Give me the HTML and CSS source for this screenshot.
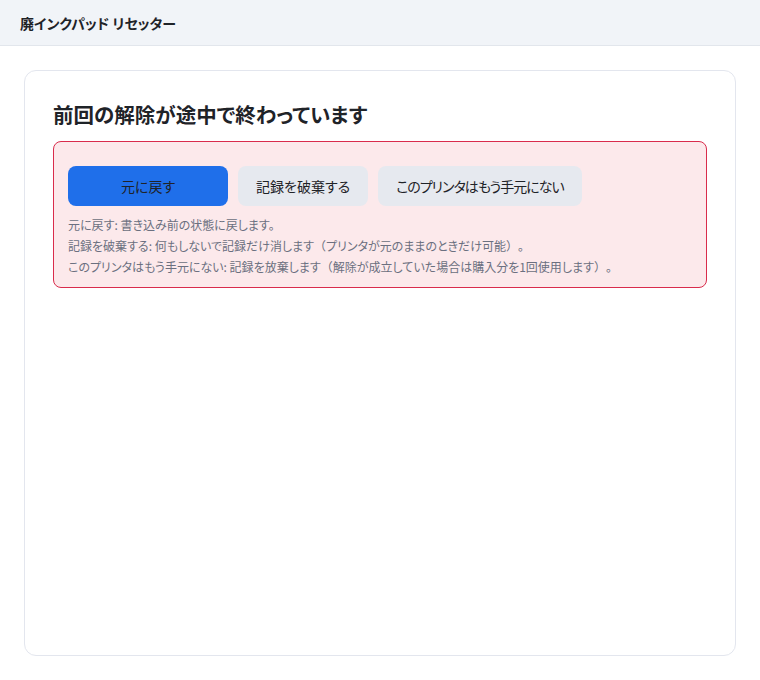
FILE: index.html
```html
<!DOCTYPE html>
<html lang="ja">
<head>
<meta charset="utf-8">
<title>廃インクパッド リセッター</title>
<link rel="stylesheet" href="styles.css">
</head>
<body>
<header class="topbar">
  <span class="app-title">廃インクパッド リセッター</span>
</header>
<main class="content">
  <section class="card">
    <h1 class="card-title">前回の解除が途中で終わっています</h1>
    <div class="alert">
      <div class="actions">
        <button class="btn btn-primary">元に戻す</button>
        <button class="btn btn-secondary">記録を破棄する</button>
        <button class="btn btn-secondary btn-long">このプリンタはもう手元にない</button>
      </div>
      <div class="notes">
        <p>元に戻す: 書き込み前の状態に戻します。</p>
        <p>記録を破棄する: 何もしないで記録だけ消します<span class="fw">（</span>プリンタが元のままのときだけ可能<span class="fw">）。</span></p>
        <p>このプリンタはもう手元にない: 記録を放棄します<span class="fw">（</span>解除が成立していた場合は購入分を1回使用します<span class="fw">）。</span></p>
      </div>
    </div>
  </section>
</main>
</body>
</html>
```
FILE: styles.css
```css
* { box-sizing: border-box; }
html, body { margin: 0; padding: 0; }
body {
  font-family: "Noto Sans CJK JP", "Noto Sans", sans-serif;
  font-feature-settings: "palt";
  color: #1f2937;
  background: #ffffff;
  height: 100vh;
  display: flex;
  flex-direction: column;
}
.topbar {
  height: 46px;
  background: #f1f4f8;
  border-bottom: 1px solid #e2e6ec;
  display: flex;
  align-items: center;
  padding: 0 20px;
  flex-shrink: 0;
}
.app-title {
  font-size: 14px;
  font-weight: 700;
  color: #1f2328;
}
.content {
  flex: 1;
  padding: 24px;
  display: flex;
  flex-direction: column;
}
.card {
  flex: 1;
  border: 1px solid #e3e6ee;
  border-radius: 12px;
  padding: 28px;
  background: #ffffff;
}
.card-title {
  margin: 0 0 12px;
  font-size: 20.5px;
  line-height: 30px;
  font-weight: 700;
  color: #1f2328;
}
.alert {
  background: #fce9eb;
  border: 1px solid #d92c4c;
  border-radius: 8px;
  padding: 24px 14px 10px;
}
.actions {
  display: flex;
  gap: 10px;
  margin-bottom: 8px;
}
.btn {
  height: 40px;
  min-width: 160px;
  padding: 0 18px;
  border: none;
  border-radius: 8px;
  font-family: inherit;
  font-feature-settings: "palt";
  font-size: 14px;
  color: #1f2328;
  cursor: pointer;
}
.btn-secondary { min-width: 0; background: #e6e9ef; }
.btn-long { letter-spacing: -1px; }
.btn-primary { background: #1f6fea; }
.notes p {
  margin: 0;
  font-size: 12px;
  line-height: 21px;
  color: #6b7080;
}
.fw {
  font-feature-settings: normal;
  text-spacing-trim: space-all;
}
```
